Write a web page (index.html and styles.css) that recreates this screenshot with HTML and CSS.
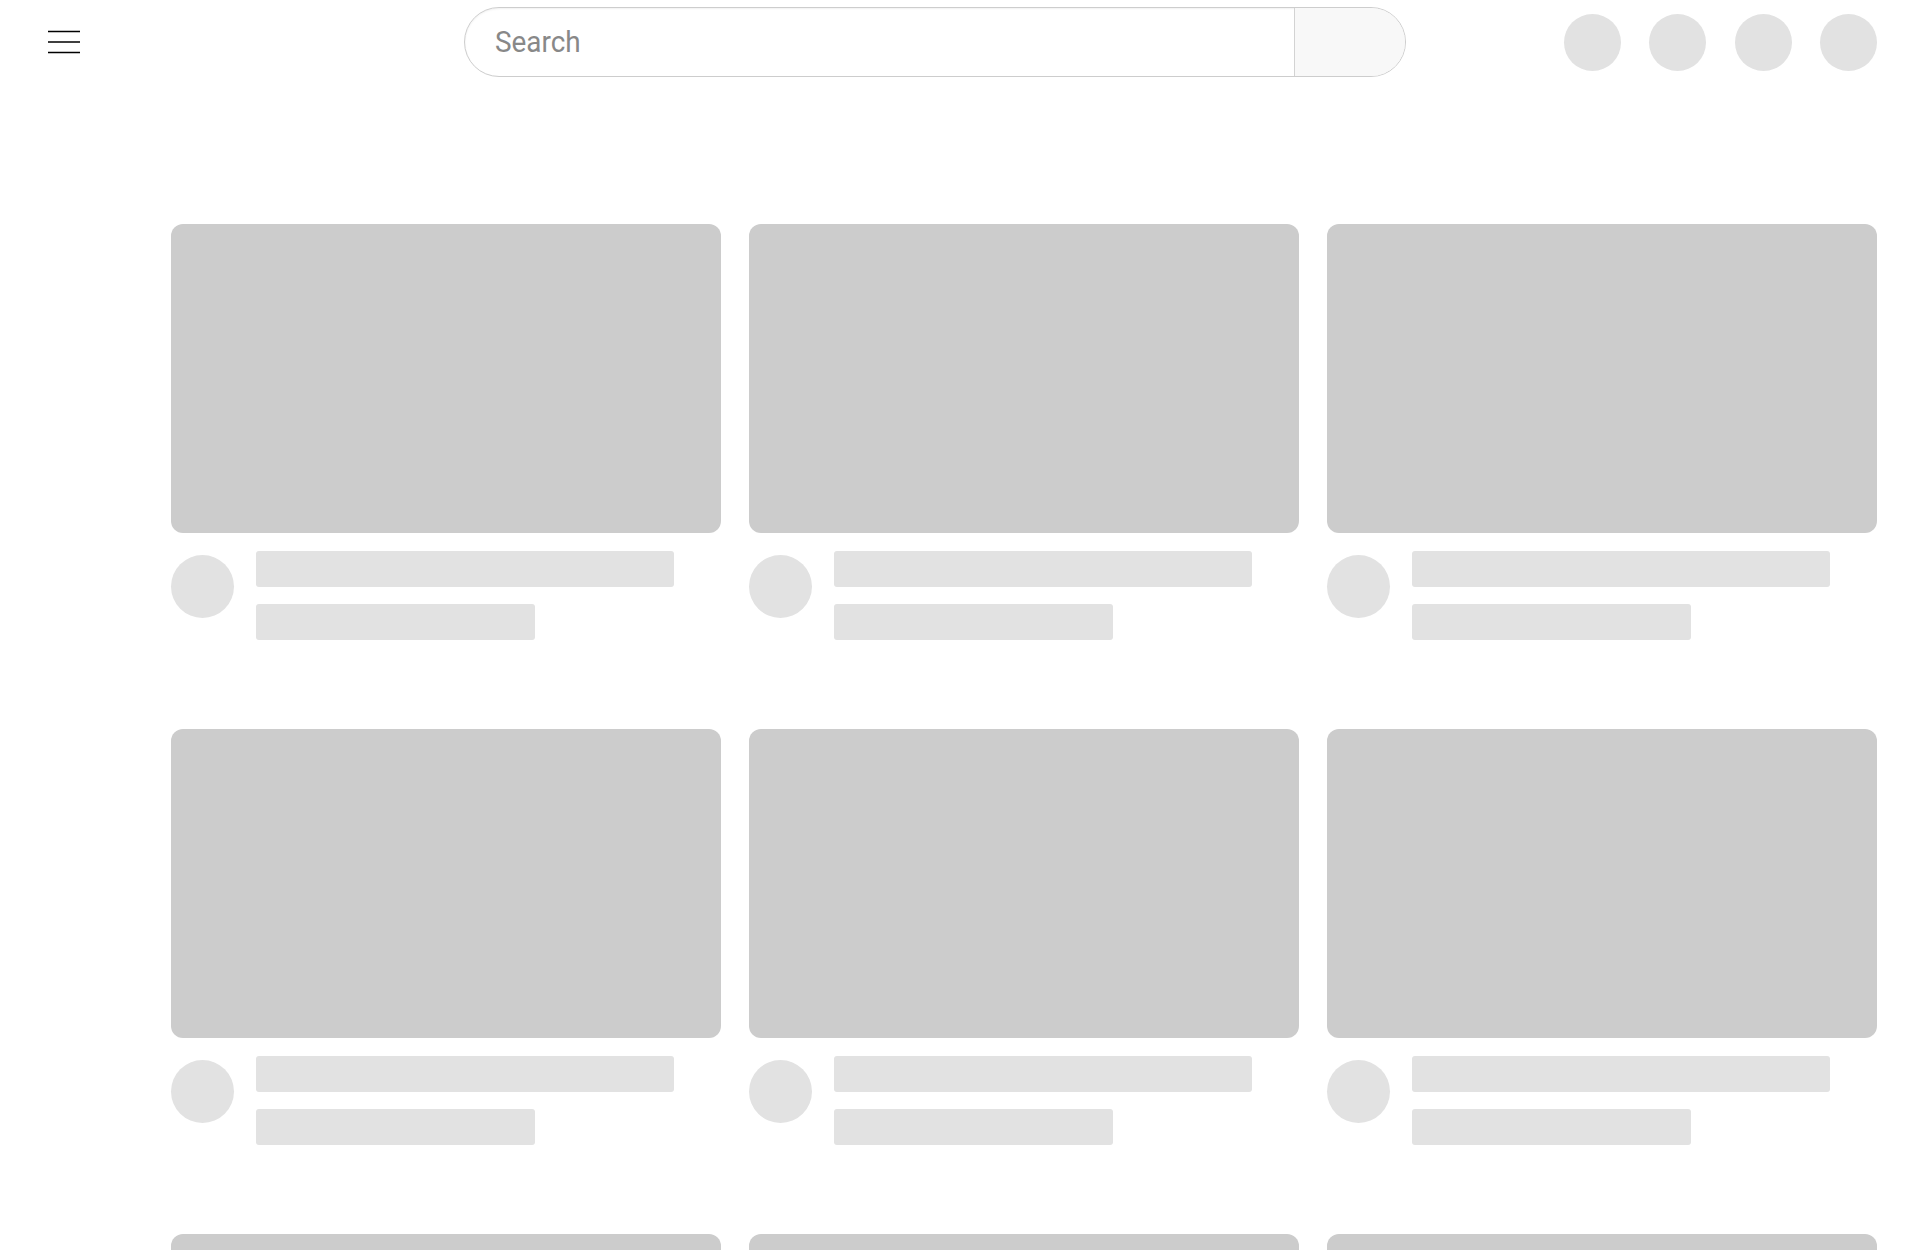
FILE: index.html
```html
<!DOCTYPE html>
<html lang="en">
<head>
<meta charset="utf-8">
<title>Home</title>
<link rel="stylesheet" href="styles.css">
</head>
<body>
<header class="topbar">
  <button class="menu-btn" aria-label="Menu">
    <svg width="32" height="24" viewBox="0 0 32 24"><path d="M0 1.5H32M0 12H32M0 22.5H32" stroke="#000" stroke-width="1.5" fill="none"/></svg>
  </button>
  <div class="search" role="search">
    <div class="search-field"><span class="search-placeholder">Search</span></div>
    <button class="search-btn" type="button" aria-label="Search"></button>
  </div>
  <div class="actions">
    <span class="action-dot"></span>
    <span class="action-dot"></span>
    <span class="action-dot"></span>
    <span class="action-dot"></span>
  </div>
</header>
<main class="feed">
  <div class="grid">
    <div class="card"><div class="thumb"></div><div class="meta"><div class="avatar"></div><div class="lines"><div class="line line-title"></div><div class="line line-sub"></div></div></div></div>
    <div class="card"><div class="thumb"></div><div class="meta"><div class="avatar"></div><div class="lines"><div class="line line-title"></div><div class="line line-sub"></div></div></div></div>
    <div class="card"><div class="thumb"></div><div class="meta"><div class="avatar"></div><div class="lines"><div class="line line-title"></div><div class="line line-sub"></div></div></div></div>
    <div class="card"><div class="thumb"></div><div class="meta"><div class="avatar"></div><div class="lines"><div class="line line-title"></div><div class="line line-sub"></div></div></div></div>
    <div class="card"><div class="thumb"></div><div class="meta"><div class="avatar"></div><div class="lines"><div class="line line-title"></div><div class="line line-sub"></div></div></div></div>
    <div class="card"><div class="thumb"></div><div class="meta"><div class="avatar"></div><div class="lines"><div class="line line-title"></div><div class="line line-sub"></div></div></div></div>
    <div class="card"><div class="thumb"></div><div class="meta"><div class="avatar"></div><div class="lines"><div class="line line-title"></div><div class="line line-sub"></div></div></div></div>
    <div class="card"><div class="thumb"></div><div class="meta"><div class="avatar"></div><div class="lines"><div class="line line-title"></div><div class="line line-sub"></div></div></div></div>
    <div class="card"><div class="thumb"></div><div class="meta"><div class="avatar"></div><div class="lines"><div class="line line-title"></div><div class="line line-sub"></div></div></div></div>
  </div>
</main>
</body>
</html>
```
FILE: styles.css
```css
* {
  box-sizing: border-box;
}

html, body {
  margin: 0;
  height: 100%;
}

body {
  background: #fff;
  font-family: Roboto, "Liberation Sans", Arial, sans-serif;
  overflow: hidden;
}

/* top bar */
.topbar {
  height: 84px;
  display: flex;
  align-items: center;
  padding: 0 43px 0 48px;
}

.menu-btn {
  width: 32px;
  height: 24px;
  padding: 0;
  border: 0;
  background: none;
  display: flex;
}

.search {
  margin: 0 0 0 384px;
  width: 942px;
  height: 70px;
  display: flex;
  border: 1.5px solid #cdcdcd;
  border-radius: 35px;
  overflow: hidden;
  box-shadow: inset 0 1px 2px rgba(0, 0, 0, 0.06);
}

.search-field {
  flex: 1;
  display: flex;
  align-items: center;
  padding-left: 30px;
}

.search-placeholder {
  font-size: 30px;
  line-height: 1;
  color: #888;
  transform: scaleX(0.93);
  transform-origin: left center;
}

.search-btn {
  width: 111px;
  border: 0;
  border-left: 1.5px solid #d3d3d3;
  background: #f8f8f8;
  padding: 0;
}

.actions {
  margin-left: auto;
  display: flex;
  gap: 28.5px;
}

.action-dot {
  width: 57px;
  height: 57px;
  border-radius: 50%;
  background: #e2e2e2;
}

/* video feed skeleton */
.feed {
  padding: 140px 0 0 171px;
}

.grid {
  display: grid;
  grid-template-columns: repeat(3, 550px);
  column-gap: 28px;
  row-gap: 89px;
}

.thumb {
  height: 309px;
  border-radius: 12px;
  background: #cccccc;
}

.meta {
  display: flex;
  margin-top: 18px;
}

.avatar {
  width: 63px;
  height: 63px;
  flex: none;
  margin-top: 4px;
  border-radius: 50%;
  background: #e2e2e2;
}

.lines {
  flex: 1;
  margin-left: 22px;
  display: flex;
  flex-direction: column;
  gap: 17px;
}

.line {
  height: 36px;
  border-radius: 3px;
  background: #e2e2e2;
}

.line-title {
  width: 418px;
}

.line-sub {
  width: 279px;
}
```
